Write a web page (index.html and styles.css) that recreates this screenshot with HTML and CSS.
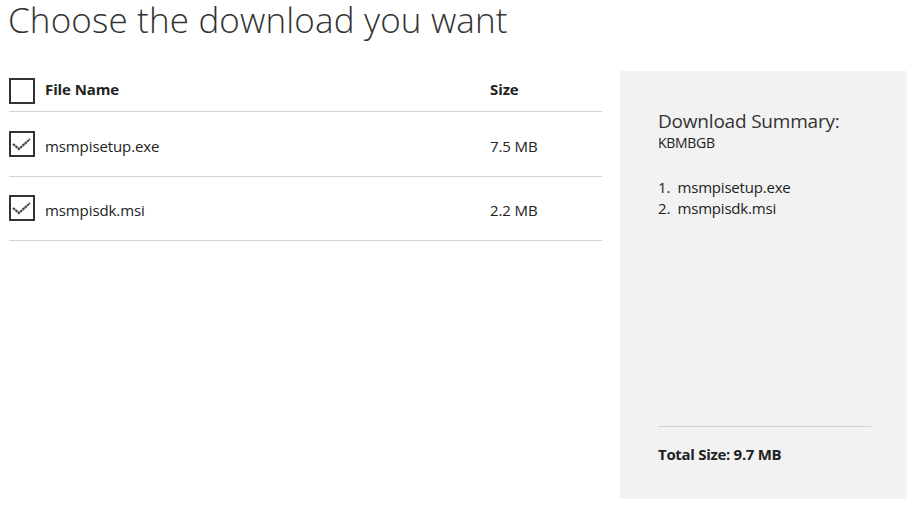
FILE: index.html
```html
<!DOCTYPE html>
<html>
<head>
<meta charset="utf-8">
<link rel="stylesheet" href="styles.css">
</head>
<body>
<h1 class="title">Choose the download you want</h1>
<div class="main">
  <div class="files">
    <div class="row head">
      <span class="box"></span>
      <span class="name">File Name</span>
      <span class="size">Size</span>
    </div>
    <div class="row">
      <span class="box checked"><svg width="22" height="22" viewBox="0 0 22 22"><path d="M2 11 L8 16 L19 6" fill="none" stroke="#4a4a4a" stroke-width="2.2" stroke-dasharray="2.6 0.5"/></svg></span>
      <span class="name">msmpisetup.exe</span>
      <span class="size">7.5 MB</span>
    </div>
    <div class="row">
      <span class="box checked"><svg width="22" height="22" viewBox="0 0 22 22"><path d="M2 11 L8 16 L19 6" fill="none" stroke="#4a4a4a" stroke-width="2.2" stroke-dasharray="2.6 0.5"/></svg></span>
      <span class="name">msmpisdk.msi</span>
      <span class="size">2.2 MB</span>
    </div>
  </div>
  <div class="summary">
    <div class="sum-top">
      <div class="sum-title">Download Summary:</div>
      <div class="sum-sub">KBMBGB</div>
      <ol class="sum-list">
        <li>msmpisetup.exe</li>
        <li>msmpisdk.msi</li>
      </ol>
    </div>
    <div class="sum-total">Total Size: 9.7 MB</div>
  </div>
</div>
</body>
</html>
```
FILE: styles.css
```css
* { box-sizing: border-box; }
body {
  margin: 0;
  font-family: "Open Sans", "Noto Sans", sans-serif;
  color: #222;
  background: #fff;
  width: 919px;
  height: 513px;
  overflow: hidden;
}
.title {
  margin: 0;
  padding: 0 0 0 8px;
  font-weight: 300;
  font-size: 35px;
  line-height: 40px;
  color: #333;
  letter-spacing: 0.15px;
}
.main {
  display: flex;
  margin-top: 31px;
  padding-left: 9px;
}
.files {
  width: 593px;
  padding-top: 7px;
}
.row {
  display: flex;
  align-items: center;
  height: 64.5px;
  border-bottom: 1px solid #d2d2d2;
  font-size: 15px;
}
.row .name, .row .size { margin-top: 4px; }
.row.head {
  height: 34px;
  align-items: flex-start;
  font-weight: 700;
}
.row.head .name, .row.head .size { line-height: 22px; margin-top: 0; }
.box {
  width: 26px;
  height: 26px;
  border: 2px solid #333;
  flex: none;
  display: flex;
  align-items: center;
  justify-content: center;
}
.name {
  margin-left: 10px;
  width: 445px;
  letter-spacing: -0.1px;
}
.size { letter-spacing: -0.1px; }
.summary {
  margin-left: 18px;
  width: 287px;
  height: 428px;
  background: #f2f2f2;
  padding: 37px 36px 35px 38px;
  display: flex;
  flex-direction: column;
  justify-content: space-between;
}
.sum-title {
  font-size: 19px;
  line-height: 26px;
  color: #333;
  letter-spacing: -0.2px;
}
.sum-sub {
  font-size: 14px;
  line-height: 17px;
  letter-spacing: -0.3px;
}
.sum-list {
  margin: 26px 0 0 0;
  padding: 0;
  list-style-position: inside;
  font-size: 15px;
  line-height: 21px;
  letter-spacing: -0.2px;
}
.sum-list li::marker {
  content: counter(list-item) ".\00a0\00a0";
}
.sum-total {
  border-top: 1px solid #d2d2d2;
  padding-top: 17px;
  font-weight: 700;
  font-size: 15px;
  letter-spacing: -0.3px;
}
```
